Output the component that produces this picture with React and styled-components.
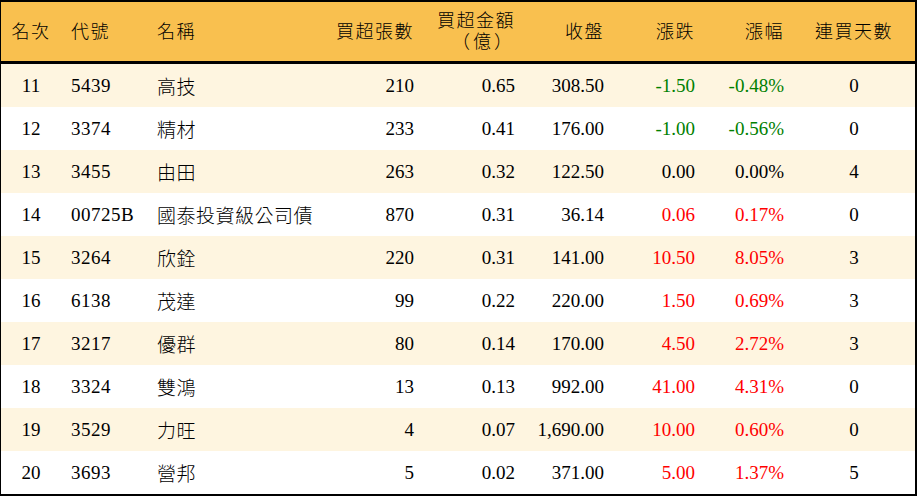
import React from 'react'
import styled, { createGlobalStyle } from 'styled-components'

const GlobalStyle = createGlobalStyle`
    html, body {
        margin:0;
        padding:0;
        background:#fff;
    }
    body {
        font-family:"Liberation Serif", "Noto Sans CJK TC", serif;
        color:#000;
    }
`

const columns = [
    { key: 'rank', label: '名次', width: 60, align: 'center' },
    { key: 'code', label: '代號', width: 86, align: 'left' },
    { key: 'name', label: '名稱', width: 182, align: 'left' },
    { key: 'lots', label: '買超張數', width: 95, align: 'right' },
    { key: 'amount', label: ['買超金額', '（億）'], width: 101, align: 'right' },
    { key: 'close', label: '收盤', width: 89, align: 'right' },
    { key: 'change', label: '漲跌', width: 91, align: 'right', tinted: true },
    { key: 'pct', label: '漲幅', width: 89, align: 'right', tinted: true },
    { key: 'days', label: '連買天數', width: 120, align: 'center' },
]

const rows = [
    ['11', '5439', '高技', '210', '0.65', '308.50', '-1.50', '-0.48%', '0'],
    ['12', '3374', '精材', '233', '0.41', '176.00', '-1.00', '-0.56%', '0'],
    ['13', '3455', '由田', '263', '0.32', '122.50', '0.00', '0.00%', '4'],
    ['14', '00725B', '國泰投資級公司債', '870', '0.31', '36.14', '0.06', '0.17%', '0'],
    ['15', '3264', '欣銓', '220', '0.31', '141.00', '10.50', '8.05%', '3'],
    ['16', '6138', '茂達', '99', '0.22', '220.00', '1.50', '0.69%', '3'],
    ['17', '3217', '優群', '80', '0.14', '170.00', '4.50', '2.72%', '3'],
    ['18', '3324', '雙鴻', '13', '0.13', '992.00', '41.00', '4.31%', '0'],
    ['19', '3529', '力旺', '4', '0.07', '1,690.00', '10.00', '0.60%', '0'],
    ['20', '3693', '營邦', '5', '0.02', '371.00', '5.00', '1.37%', '5'],
]

const toneOf = (value) => {
    const n = parseFloat(value)
    if (n > 0) return 'up'
    if (n < 0) return 'down'
    return 'flat'
}

const App = () => {
    return <Wrapper>
        <GlobalStyle/>
        <Board>
            <HeaderRow>
                {columns.map(col =>
                    <HeadCell key={col.key} $width={col.width} $align={col.align}>
                        {Array.isArray(col.label)
                            ? col.label.map((line, k) => <HeadLine key={line} $sub={k > 0}>{line}</HeadLine>)
                            : col.label}
                    </HeadCell>
                )}
            </HeaderRow>
            {rows.map((row, i) =>
                <Row key={row[0]} $striped={i % 2 === 0}>
                    {row.map((value, j) =>
                        <Cell
                            key={columns[j].key}
                            $width={columns[j].width}
                            $align={columns[j].align}
                            $tone={columns[j].tinted ? toneOf(value) : 'flat'}
                        >
                            {value}
                        </Cell>
                    )}
                </Row>
            )}
        </Board>
    </Wrapper>
}

const Wrapper = styled.div`
    width:918px;
    height:496px;
    background:#fff;
`

const Board = styled.div`
    width:917px;
    height:496px;
    box-sizing:border-box;
    border:2px solid #000;
    border-left-width:1px;
    display:flex;
    flex-direction:column;
`

const HeaderRow = styled.div`
    display:flex;
    height:59px;
    background:#f9c04f;
    border-bottom:3px solid #000;
    flex-shrink:0;
`

const HeadCell = styled.div`
    width:${p => p.$width}px;
    flex-shrink:0;
    box-sizing:border-box;
    display:flex;
    flex-direction:column;
    justify-content:center;
    align-items:${p => p.$align === 'left' ? 'flex-start' : p.$align === 'right' ? 'flex-end' : 'center'};
    padding:${p => p.$align === 'left' ? '1px 0 0 10px' : p.$align === 'right' ? '1px 10px 0 0' : '1px 0 0'};
    font-size:18px;
    font-weight:300;
    letter-spacing:1.5px;
    line-height:21px;
`

const HeadLine = styled.span`
    display:block;
    letter-spacing:${p => p.$sub ? '3px' : '1.5px'};
`

const Row = styled.div`
    display:flex;
    flex:1;
    background:${p => p.$striped ? '#fef5e0' : '#fff'};
`

const Cell = styled.div`
    width:${p => p.$width}px;
    flex-shrink:0;
    box-sizing:border-box;
    display:flex;
    align-items:center;
    justify-content:${p => p.$align === 'left' ? 'flex-start' : p.$align === 'right' ? 'flex-end' : 'center'};
    padding:${p => p.$align === 'left' ? '0 0 0 10px' : p.$align === 'right' ? '0 10px 0 0' : '0'};
    font-size:19px;
    font-weight:300;
    letter-spacing:${p => p.$align === 'left' ? '0.5px' : '0'};
    white-space:nowrap;
    color:${p => p.$tone === 'up' ? '#ff0000' : p.$tone === 'down' ? '#008000' : '#000'};
`

export default App
